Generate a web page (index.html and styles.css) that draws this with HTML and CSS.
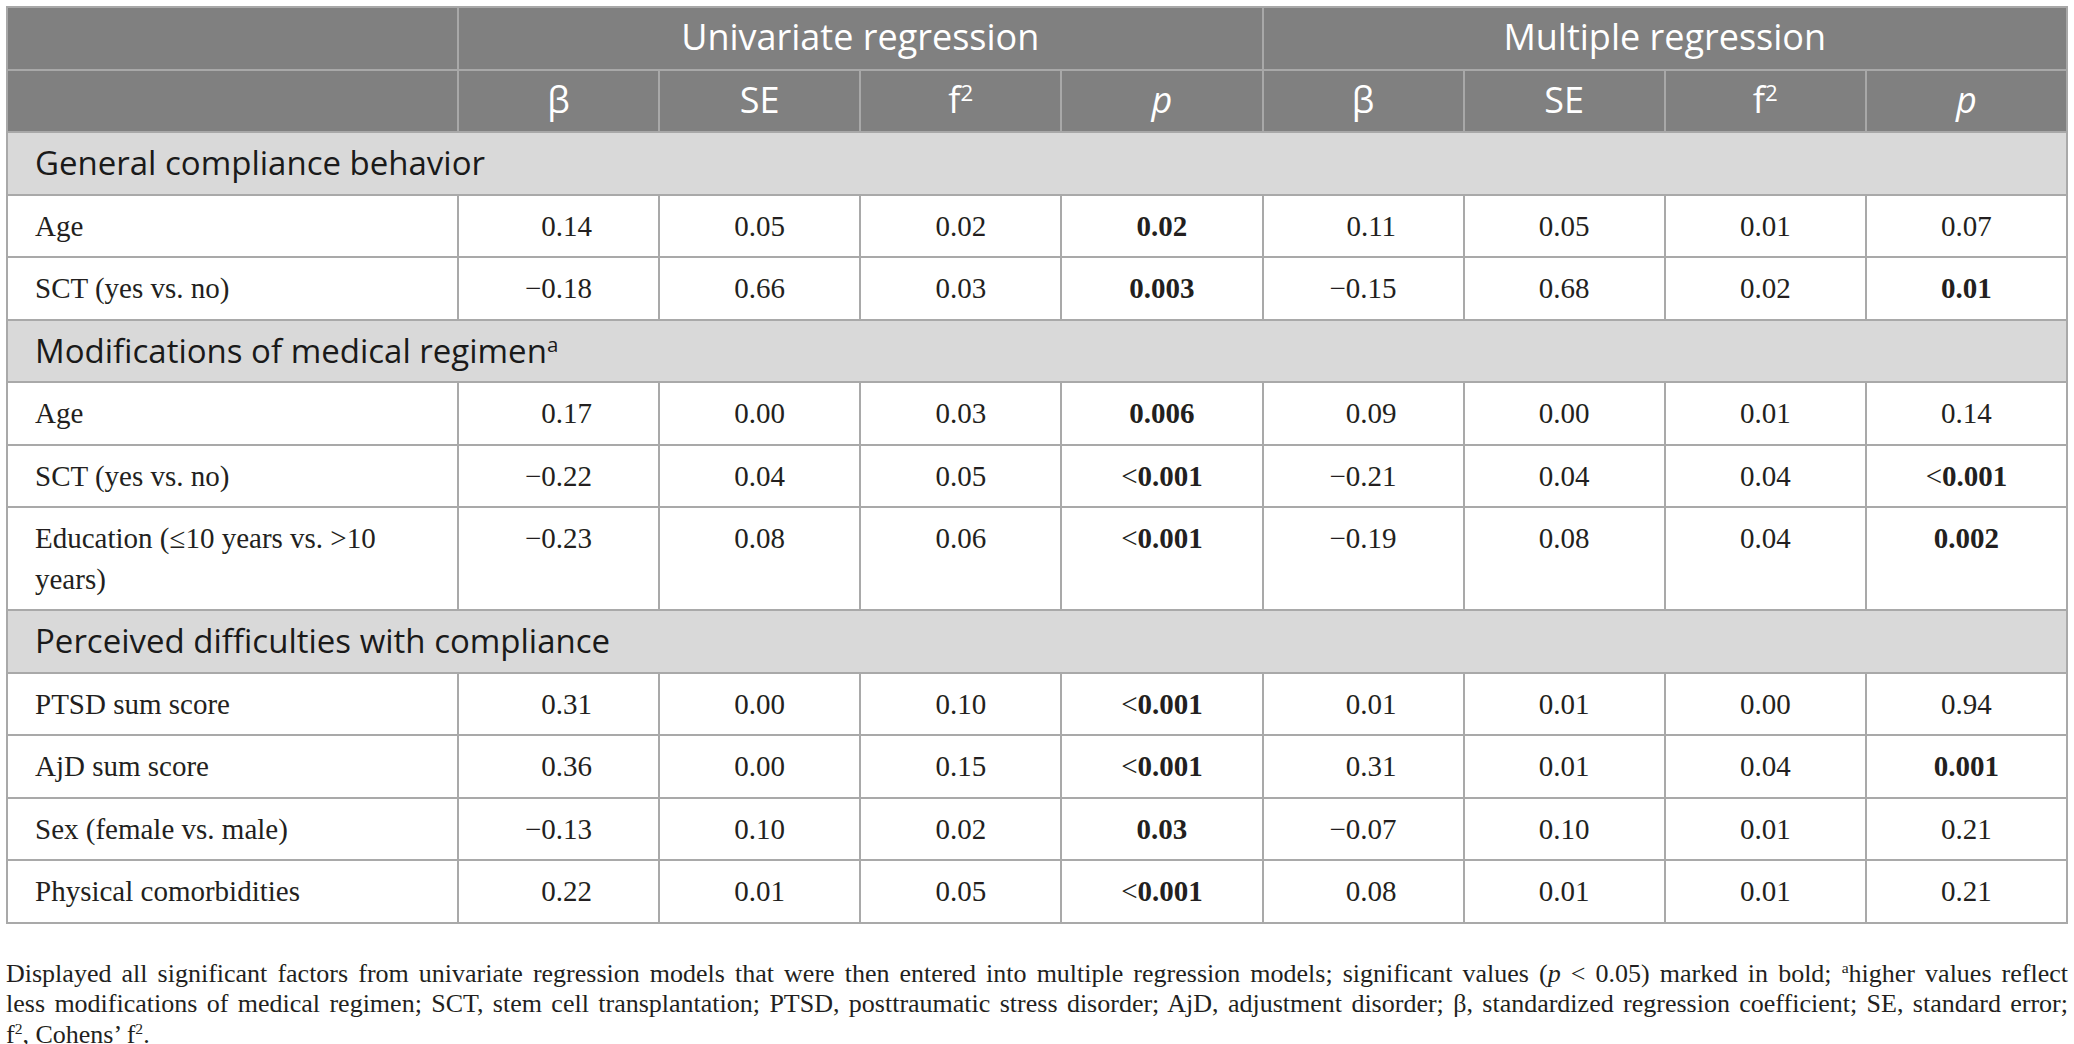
FILE: index.html
```html
<!DOCTYPE html>
<html>
<head>
  <title>Regression results</title>
  <meta charset="utf-8" />
  <link rel="stylesheet" href="styles.css">
</head>
<body>

  <table class="reg">
    <colgroup>
      <col class="c-label">
      <col><col><col><col>
      <col><col><col><col>
    </colgroup>
    <thead>
      <tr>
        <th></th>
        <th colspan="4">Univariate regression</th>
        <th colspan="4">Multiple regression</th>
      </tr>
      <tr>
        <th></th>
        <th>β</th><th>SE</th><th>f<sup>2</sup></th><th><i>p</i></th>
        <th>β</th><th>SE</th><th>f<sup>2</sup></th><th><i>p</i></th>
      </tr>
    </thead>
    <tbody>
      <tr class="section"><td colspan="9">General compliance behavior</td></tr>
      <tr>
        <td>Age</td>
        <td><span class="ghost">−</span>0.14</td><td>0.05</td><td>0.02</td><td><b>0.02</b></td>
        <td><span class="ghost">−</span>0.11</td><td>0.05</td><td>0.01</td><td>0.07</td>
      </tr>
      <tr>
        <td>SCT (yes vs. no)</td>
        <td>−0.18</td><td>0.66</td><td>0.03</td><td><b>0.003</b></td>
        <td>−0.15</td><td>0.68</td><td>0.02</td><td><b>0.01</b></td>
      </tr>

      <tr class="section"><td colspan="9">Modifications of medical regimen<sup>a</sup></td></tr>
      <tr>
        <td>Age</td>
        <td><span class="ghost">−</span>0.17</td><td>0.00</td><td>0.03</td><td><b>0.006</b></td>
        <td><span class="ghost">−</span>0.09</td><td>0.00</td><td>0.01</td><td>0.14</td>
      </tr>
      <tr>
        <td>SCT (yes vs. no)</td>
        <td>−0.22</td><td>0.04</td><td>0.05</td><td>&lt;<b>0.001</b></td>
        <td>−0.21</td><td>0.04</td><td>0.04</td><td>&lt;<b>0.001</b></td>
      </tr>
      <tr>
        <td>Education (≤10 years vs. &gt;10 years)</td>
        <td>−0.23</td><td>0.08</td><td>0.06</td><td>&lt;<b>0.001</b></td>
        <td>−0.19</td><td>0.08</td><td>0.04</td><td><b>0.002</b></td>
      </tr>

      <tr class="section"><td colspan="9">Perceived difficulties with compliance</td></tr>
      <tr>
        <td>PTSD sum score</td>
        <td><span class="ghost">−</span>0.31</td><td>0.00</td><td>0.10</td><td>&lt;<b>0.001</b></td>
        <td><span class="ghost">−</span>0.01</td><td>0.01</td><td>0.00</td><td>0.94</td>
      </tr>
      <tr>
        <td>AjD sum score</td>
        <td><span class="ghost">−</span>0.36</td><td>0.00</td><td>0.15</td><td>&lt;<b>0.001</b></td>
        <td><span class="ghost">−</span>0.31</td><td>0.01</td><td>0.04</td><td><b>0.001</b></td>
      </tr>
      <tr>
        <td>Sex (female vs. male)</td>
        <td>−0.13</td><td>0.10</td><td>0.02</td><td><b>0.03</b></td>
        <td>−0.07</td><td>0.10</td><td>0.01</td><td>0.21</td>
      </tr>
      <tr>
        <td>Physical comorbidities</td>
        <td><span class="ghost">−</span>0.22</td><td>0.01</td><td>0.05</td><td>&lt;<b>0.001</b></td>
        <td><span class="ghost">−</span>0.08</td><td>0.01</td><td>0.01</td><td>0.21</td>
      </tr>
    </tbody>
  </table>

  <!-- footnote keeps the journal's own line breaks -->
  <div class="note">
    <span class="line">Displayed all significant factors from univariate regression models that were then entered into multiple regression models; significant values (<i>p</i> &lt; 0.05) marked in bold; <sup>a</sup>higher values reflect</span>
    <span class="line">less modifications of medical regimen; SCT, stem cell transplantation; PTSD, posttraumatic stress disorder; AjD, adjustment disorder; β, standardized regression coefficient; SE, standard error;</span>
    <span class="line last">f<sup>2</sup>, Cohens’ f<sup>2</sup>.</span>
  </div>

</body>
</html>
```

FILE: styles.css
```css
html, body {
  margin: 0;
  background: #fff;
}

body {
  padding: 6px 6px 0 6px;
  color: #231f20;
  font-family: "Liberation Serif", "Times New Roman", serif;
}

.reg {
  width: 2062px;
  table-layout: fixed;
  border-collapse: collapse;
  font-size: 29px;
  line-height: 40.5px;
}

.reg col.c-label {
  width: 451px;
}

.reg th, .reg td {
  border: 2px solid #a9a9a9;
  padding: 10px 27px;
  vertical-align: top;
}

.reg th {
  background-color: #808080;
  color: #fff;
  font-family: "Open Sans", "Noto Sans", sans-serif;
  font-weight: normal;
  font-size: 36px;
  line-height: 38px;
  padding: 10px 27px 12.5px;
  text-align: center;
  border-color: #a8a8a8;
}

.reg th i {
  font-style: italic;
}

.reg sup {
  font-size: 0.62em;
  line-height: 0;
  vertical-align: 0.55em;
}

.reg td {
  text-align: center;
}

.reg td:first-child {
  text-align: left;
}

.reg tr.section td {
  background-color: #d9d9d9;
  color: #1a1a1a;
  font-family: "Open Sans", "Noto Sans", sans-serif;
  font-size: 33px;
  line-height: 39px;
  padding: 10px 27px 11.5px;
}

.reg b {
  font-weight: bold;
}

.ghost {
  visibility: hidden;
}

.note {
  width: 2062px;
  margin-top: 35px;
  font-size: 26px;
  line-height: 30.5px;
  color: #231f20;
}

.note .line {
  display: block;
  white-space: nowrap;
  text-align: justify;
  text-align-last: justify;
}

.note .line.last {
  text-align-last: left;
}

.note sup {
  font-size: 0.6em;
  line-height: 0;
  vertical-align: 0.6em;
}
```
